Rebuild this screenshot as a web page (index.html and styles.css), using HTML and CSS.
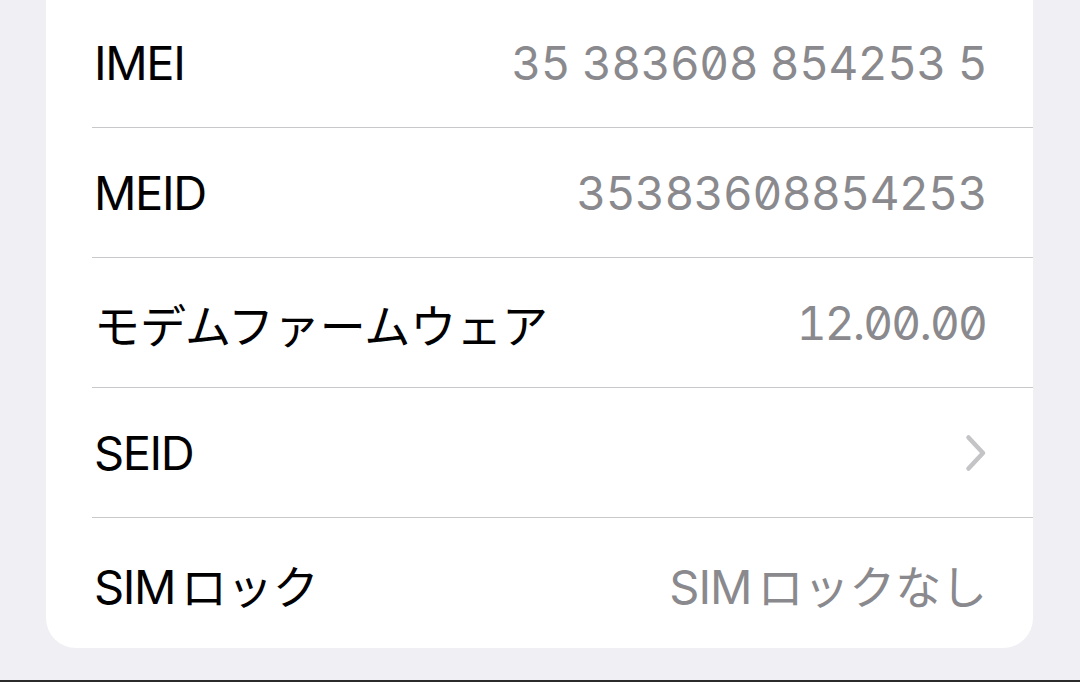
FILE: index.html
```html
<!DOCTYPE html>
<html lang="ja">
<head>
<meta charset="utf-8">
<title>情報</title>
<link rel="stylesheet" href="styles.css">
</head>
<body>
<div class="screen">
  <div class="card">
    <div class="row">
      <div class="row-inner">
        <span class="label">IMEI</span>
        <span class="value num">35 383608 854253 5</span>
      </div>
    </div>
    <div class="row">
      <div class="row-inner">
        <span class="label">MEID</span>
        <span class="value num">35383608854253</span>
      </div>
    </div>
    <div class="row">
      <div class="row-inner">
        <span class="label ja">モデムファームウェア</span>
        <span class="value num ver">12.00.00</span>
      </div>
    </div>
    <div class="row">
      <div class="row-inner">
        <span class="label">SEID</span>
        <svg class="chevron" width="26" height="40" viewBox="0 0 26 40" aria-hidden="true">
          <path d="M5.5 4.5 L20 20 L5.5 35.5" fill="none" stroke="#c4c4c7" stroke-width="4.5" stroke-linecap="round" stroke-linejoin="round"/>
        </svg>
      </div>
    </div>
    <div class="row last">
      <div class="row-inner">
        <span class="label">SIM<span class="ja">ロック</span></span>
        <span class="value">SIM<span class="ja">ロックなし</span></span>
      </div>
    </div>
  </div>
</div>
</body>
</html>
```

FILE: styles.css
```css
html, body {
  margin: 0;
  padding: 0;
}

body {
  background: #2b2b2b;
  font-family: "Inter", "Noto Sans CJK JP", sans-serif;
  -webkit-font-smoothing: antialiased;
}

.screen {
  height: 680px;
  background: #efeff4;
  overflow: hidden;
  padding-left: 46px;
  box-sizing: border-box;
}

.card {
  width: 987px;
  margin-top: -2px;
  background: #ffffff;
  border-radius: 0 0 30px 30px;
  display: flex;
  flex-direction: column;
}

.row {
  height: 130px;
  padding-left: 46px;
  box-sizing: border-box;
  display: flex;
}

.row-inner {
  flex: 1;
  display: flex;
  align-items: center;
  justify-content: space-between;
  padding-right: 46px;
  padding-left: 2px;
  border-bottom: 1px solid #c8c8cb;
}

.row.last .row-inner {
  border-bottom: none;
  padding-top: 1px;
}

.label {
  font-size: 47px;
  color: #000000;
  letter-spacing: -1.4px;
  white-space: nowrap;
}

.value {
  font-size: 47px;
  color: #8a8a8e;
  letter-spacing: -1px;
  white-space: nowrap;
}

.num {
  font-size: 46px;
  font-feature-settings: "tnum" 1, "zero" 1;
  letter-spacing: -0.5px;
}

.num.ver {
  letter-spacing: -1.8px;
  margin-right: 1px;
}

.ja {
  font-family: "Noto Sans CJK JP", sans-serif;
  font-size: 46px;
  letter-spacing: -0.1px;
}

.label .ja {
  margin-left: 6px;
}

.value .ja {
  margin-left: 6px;
}

.chevron {
  display: block;
  margin-right: -2px;
}
```
